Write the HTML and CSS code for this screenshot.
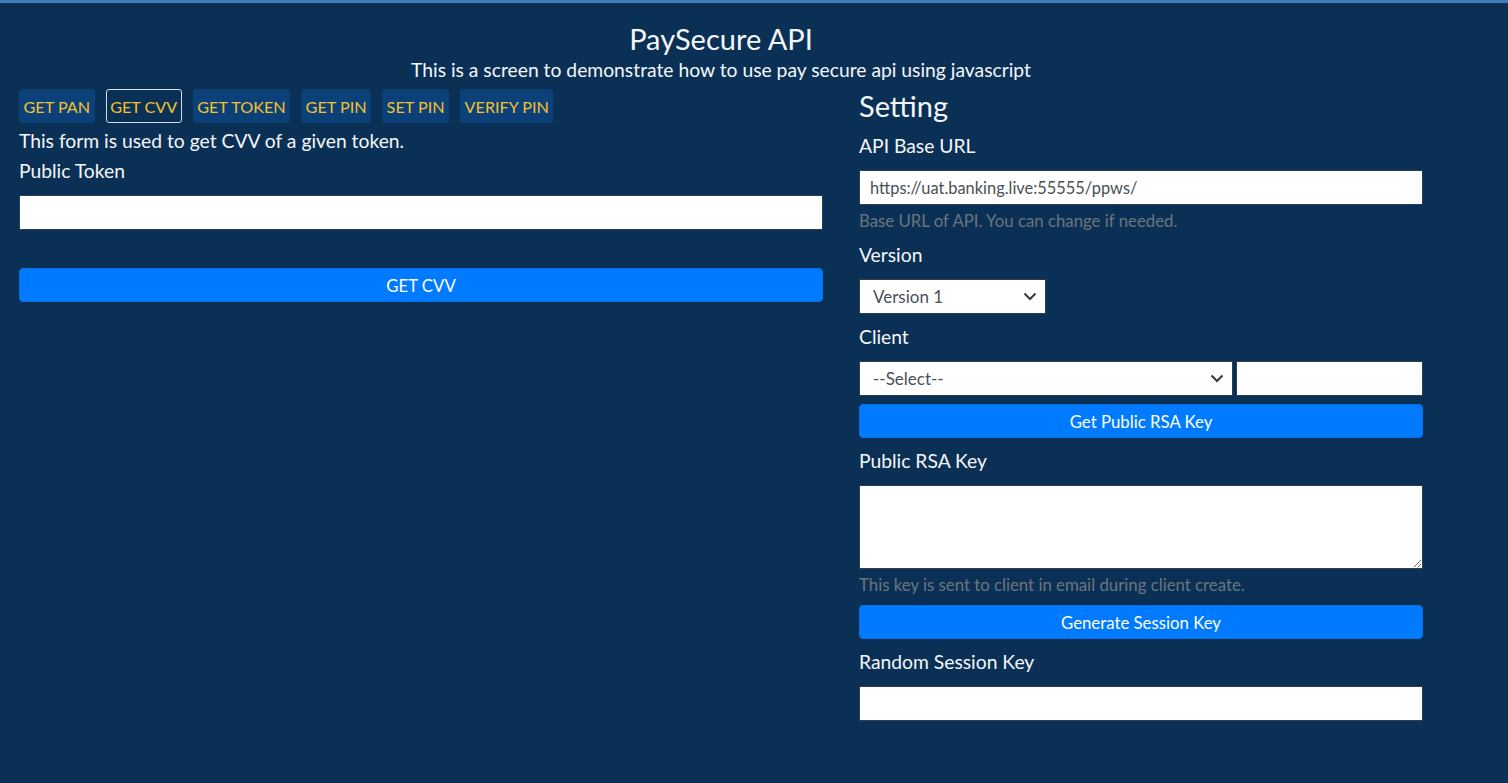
FILE: index.html
```html
<!DOCTYPE html>
<html lang="en">
<head>
<meta charset="utf-8">
<title>PaySecure API</title>
<link rel="stylesheet" href="styles.css">
</head>
<body>
<div class="topbar"></div>
<div class="page">
  <header class="header">
    <h1 class="title">PaySecure API</h1>
    <p class="subtitle">This is a screen to demonstrate how to use pay secure api using javascript</p>
  </header>
  <div class="grid">
    <section class="left">
      <nav class="tabs">
        <button class="tab">GET PAN</button>
        <button class="tab active">GET CVV</button>
        <button class="tab">GET TOKEN</button>
        <button class="tab">GET PIN</button>
        <button class="tab">SET PIN</button>
        <button class="tab">VERIFY PIN</button>
      </nav>
      <p class="desc">This form is used to get CVV of a given token.</p>
      <label class="label">Public Token</label>
      <input class="field" type="text">
      <button class="btn btn-wide">GET CVV</button>
    </section>
    <section class="right">
      <h2 class="heading">Setting</h2>
      <label class="label">API Base URL</label>
      <input class="field url" type="text" value="https://uat.banking.live:55555/ppws/">
      <p class="help">Base URL of API. You can change if needed.</p>
      <label class="label">Version</label>
      <div class="select-wrap version">
        <select class="field select"><option>Version 1</option></select>
        <svg class="chev" width="14" height="9" viewBox="0 0 14 9"><path d="M1.5 1.5 L7 7 L12.5 1.5" fill="none" stroke="#343a40" stroke-width="2"/></svg>
      </div>
      <label class="label">Client</label>
      <div class="client-row">
        <div class="select-wrap client">
          <select class="field select"><option>--Select--</option></select>
          <svg class="chev" width="14" height="9" viewBox="0 0 14 9"><path d="M1.5 1.5 L7 7 L12.5 1.5" fill="none" stroke="#343a40" stroke-width="2"/></svg>
        </div>
        <input class="field" type="text">
      </div>
      <button class="btn btn-small">Get Public RSA Key</button>
      <label class="label">Public RSA Key</label>
      <textarea class="field area"></textarea>
      <p class="help">This key is sent to client in email during client create.</p>
      <button class="btn btn-gen">Generate Session Key</button>
      <label class="label">Random Session Key</label>
      <input class="field" type="text">
    </section>
  </div>
</div>
</body>
</html>
```

FILE: styles.css
```css
* { box-sizing: border-box; }
html, body {
  margin: 0;
  padding: 0;
  background: #0b3056;
  height: 100%;
}
body {
  font-family: "Lato", "Noto Sans", sans-serif;
  color: #f4f6f8;
  overflow: hidden;
}
.topbar {
  height: 4px;
  background: #3f7dbd;
  border-bottom: 1px solid #12304f;
}
.page {
  width: 1404px;
  margin-left: 19px;
}
.header {
  text-align: center;
  padding-top: 18px;
}
.title {
  margin: 0;
  font-size: 29px;
  font-weight: 400;
  line-height: 34px;
}
.subtitle {
  margin: 0;
  font-size: 19.3px;
  line-height: 28px;
}
.grid {
  display: grid;
  grid-template-columns: 804px 564px;
  column-gap: 36px;
  margin-top: 5px;
}
.left, .right {
  display: flex;
  flex-direction: column;
  align-items: stretch;
}
.tabs {
  display: flex;
  gap: 11px;
  height: 34px;
}
.tab {
  font-family: inherit;
  font-size: 16.2px;
  color: #f2c230;
  background: #0b4078;
  border: 1px solid #0b4078;
  border-radius: 3px;
  padding: 0 3.5px;
  height: 34px;
  cursor: pointer;
}
.tab.active {
  background: #0b3056;
  border-color: #d6dde6;
}
.desc {
  margin: 3px 0 0;
  font-size: 19.3px;
  line-height: 30px;
}
.label {
  display: block;
  font-size: 19.3px;
  line-height: 30px;
  margin-top: 0;
}
.right .label { margin-top: 8px; }
.heading {
  margin: 0;
  font-size: 29px;
  font-weight: 400;
  line-height: 34px;
}
.field {
  display: block;
  width: 100%;
  height: 35px;
  margin-top: 9px;
  border: 1px solid #2a3e55;
  border-radius: 0;
  background: #fff;
  font-family: inherit;
  font-size: 16.4px;
  color: #495057;
  padding: 0 10px;
  outline: none;
}
.help {
  margin: 5px 0 0;
  font-size: 16.8px;
  line-height: 22px;
  color: #6c757d;
}
.select-wrap {
  position: relative;
  margin-top: 9px;
}
.select-wrap .field { margin-top: 0; }
.select {
  appearance: none;
  -webkit-appearance: none;
  padding-left: 13px;
  font-size: 17px;
}
.chev {
  position: absolute;
  right: 9px;
  top: 13px;
}
.version { width: 187px; }
.client-row {
  display: flex;
  gap: 3px;
  margin-top: 9px;
}
.client-row .select-wrap { margin-top: 0; width: 374px; }
.client-row > .field { margin-top: 0; flex: 1; }
.btn {
  display: block;
  width: 100%;
  height: 34px;
  background: #007bff;
  color: #fff;
  border: 1px solid #0a6fe0;
  border-radius: 4px;
  font-family: inherit;
  font-size: 16.8px;
  cursor: pointer;
}
.btn-wide { margin-top: 38px; }
.btn-small { margin-top: 8px; }
.btn-gen { margin-top: 9px; }
.area {
  height: 84px;
  resize: vertical;
  padding: 6px 10px;
}
```
